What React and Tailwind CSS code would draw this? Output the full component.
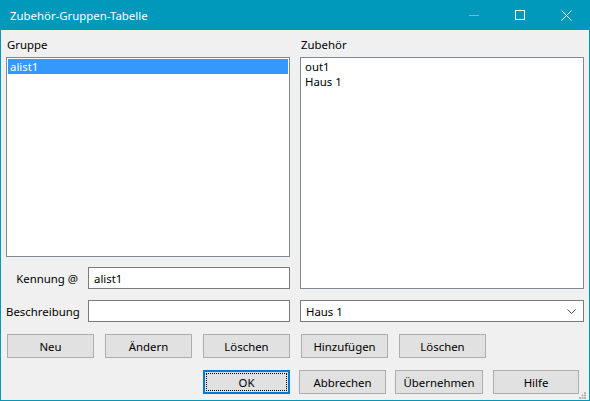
import React from "react";

const font = { fontFamily: '"Noto Sans", "Open Sans", sans-serif' };

function Button({ label, className = "", focused = false }) {
  if (focused) {
    return (
      <div className={`h-[24px] border-2 border-[#0078d7] bg-[#e1e1e1] p-[1px] ${className}`}>
        <div className="flex h-full w-full items-center justify-center border border-dotted border-black text-black">
          {label}
        </div>
      </div>
    );
  }
  return (
    <div
      className={`flex h-[24px] items-center justify-center border border-[#adadad] bg-[#e1e1e1] text-black ${className}`}
    >
      {label}
    </div>
  );
}

function SizeGrip() {
  return (
    <svg width="7" height="7" viewBox="0 0 7 7" className="mr-[1px] mb-[1px] self-end">
      <rect x="5" y="0" width="2" height="2" fill="#b8b8b8" />
      <rect x="2.5" y="2.5" width="2" height="2" fill="#b8b8b8" />
      <rect x="5" y="2.5" width="2" height="2" fill="#b8b8b8" />
      <rect x="0" y="5" width="2" height="2" fill="#b8b8b8" />
      <rect x="2.5" y="5" width="2" height="2" fill="#b8b8b8" />
      <rect x="5" y="5" width="2" height="2" fill="#b8b8b8" />
    </svg>
  );
}

export default function App() {
  return (
    <div style={font} className="flex h-[401px] w-[590px] flex-col bg-[#0099bc] px-[1px] pb-[1px] leading-[15px]">
      {/* Title bar */}
      <div className="flex h-[30px] shrink-0 items-center">
        <span className="ml-[9px] text-[11.4px] text-white">Zubehör-Gruppen-Tabelle</span>
        <div className="ml-auto flex h-full items-center">
          <div className="flex h-full w-[46px] items-center justify-center">
            <div className="h-[1px] w-[10px] bg-[#66c2d7]" />
          </div>
          <div className="flex h-full w-[46px] items-center justify-center">
            <div className="h-[10px] w-[10px] border border-white" />
          </div>
          <div className="flex h-full w-[46px] items-center justify-center">
            <svg width="11" height="11" viewBox="0 0 11 11">
              <path d="M0.5 0.5 L10.5 10.5 M10.5 0.5 L0.5 10.5" stroke="white" strokeWidth="1" />
            </svg>
          </div>
        </div>
      </div>

      {/* Body */}
      <div className="flex flex-1 flex-col bg-[#f0f0f0] pl-[5px] text-[11.4px] text-black">
        <div className="flex gap-[10px]">
          {/* Gruppe */}
          <div className="flex w-[284px] flex-col">
            <div className="mt-[7px] mb-[5px] h-[15px] pl-[1px]">Gruppe</div>
            <div className="h-[200px] border border-[#828790] bg-white p-[1px]">
              <div className="h-[15px] bg-[#3399ff] pl-[2px] text-white">alist1</div>
            </div>
            <div className="mt-[10px] flex items-center">
              <div className="w-[72px] text-right">Kennung @</div>
              <div className="ml-[10px] flex h-[22px] flex-1 items-center border border-[#7a7a7a] bg-white pl-[5px]">
                alist1
              </div>
            </div>
            <div className="mt-[11px] flex items-center">
              <div className="w-[72px] text-right">Beschreibung</div>
              <div className="ml-[10px] h-[22px] flex-1 border border-[#7a7a7a] bg-white" />
            </div>
            <div className="mt-[12px] ml-[1px] flex gap-[11px]">
              <Button label="Neu" className="w-[87px]" />
              <Button label="Ändern" className="w-[87px]" />
              <Button label="Löschen" className="w-[87px]" />
            </div>
          </div>

          {/* Zubehör */}
          <div className="flex w-[284px] flex-col">
            <div className="mt-[7px] mb-[5px] h-[15px] pl-[1px]">Zubehör</div>
            <div className="flex h-[232px] flex-col border border-[#828790] bg-white p-[1px] pl-[4px]">
              <div className="h-[15px]">out1</div>
              <div className="h-[15px]">Haus 1</div>
            </div>
            <div className="mt-[11px] flex h-[22px] items-center border border-[#7a7a7a] bg-white pl-[5px] pr-[7px]">
              <span className="flex-1">Haus 1</span>
              <svg width="9" height="5" viewBox="0 0 9 5">
                <path d="M0.5 0.5 L4.5 4.5 L8.5 0.5" fill="none" stroke="#505050" strokeWidth="1" />
              </svg>
            </div>
            <div className="mt-[12px] ml-[1px] flex gap-[11px]">
              <Button label="Hinzufügen" className="w-[87px]" />
              <Button label="Löschen" className="w-[87px]" />
            </div>
          </div>
        </div>

        {/* Dialog buttons */}
        <div className="mt-[12px] flex flex-1">
          <Button label="OK" focused className="ml-[197px] w-[87px]" />
          <Button label="Abbrechen" className="ml-[9px] w-[87px]" />
          <Button label="Übernehmen" className="ml-[9px] w-[88px]" />
          <Button label="Hilfe" className="ml-[10px] w-[86px]" />
          <SizeGrip />
        </div>
      </div>
    </div>
  );
}
